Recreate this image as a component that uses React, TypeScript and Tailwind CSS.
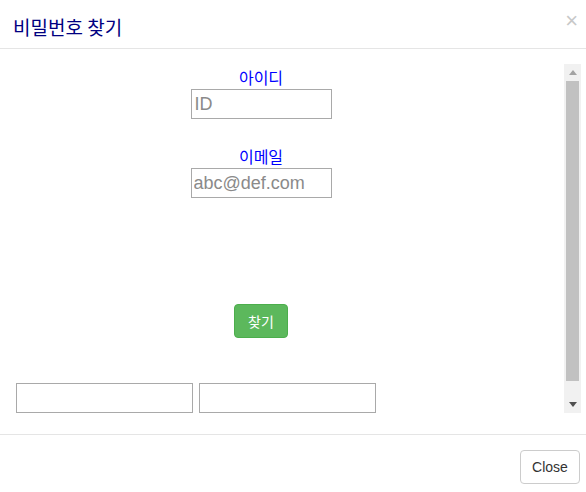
import React from 'react'

const kr = "font-['Noto_Sans_CJK_KR','Noto_Sans',sans-serif]"
const lat = "font-['Liberation_Sans','Noto_Sans_CJK_KR',sans-serif]"

const App: React.FC = () => {
    return (
        <div className="w-[586px] h-[492px] bg-white flex flex-col">
            {/* Header */}
            <div className="h-[49px] shrink-0 border-b border-[#e5e5e5] pl-[13px] pr-[8px] flex items-center justify-between">
                <h4 className={`${kr} text-[19px] leading-none text-[#000080] mt-[4px]`}>비밀번호 찾기</h4>
                <button className={`${lat} text-[22px] font-normal leading-none text-[#c8c8c8] -mt-[6px]`}>×</button>
            </div>

            {/* Body */}
            <div className="flex-1 pt-[15px]">
                <div className="h-[349px] ml-[15px] mr-[5px] flex">
                    <div className="flex-1 overflow-hidden">
                        <div className="pt-[2px]">
                            <div className="w-[492px] flex flex-col items-center">
                                <label className={`${kr} text-[16px] leading-[23px] text-[#0000ff]`}>아이디</label>
                                <input
                                    className={`${lat} w-[141px] h-[30px] border border-[#a9a9a9] px-[3px] text-[18px] outline-none placeholder:text-[#8a8a8a]`}
                                    placeholder="ID"
                                />
                                <label className={`${kr} text-[16px] leading-[23px] text-[#0000ff] mt-[26px]`}>이메일</label>
                                <input
                                    className={`${lat} w-[141px] h-[30px] border border-[#a9a9a9] px-[2px] text-[18px] outline-none placeholder:text-[#8a8a8a]`}
                                    placeholder="abc@def.com"
                                />
                                <button className={`${kr} mt-[106px] w-[54px] h-[34px] rounded-[4px] bg-[#5cb85c] border border-[#4cae4c] text-white text-[14px]`}>
                                    찾기
                                </button>
                            </div>
                            <div className="mt-[45px] ml-[1px] flex gap-[6px]">
                                <input className="w-[177px] h-[30px] border border-[#a9a9a9] outline-none" />
                                <input className="w-[177px] h-[30px] border border-[#a9a9a9] outline-none" />
                            </div>
                        </div>
                    </div>

                    {/* Scrollbar */}
                    <div className="w-[17px] shrink-0 bg-[#f1f1f1] flex flex-col items-center">
                        <div className="h-[17px] flex items-center justify-center">
                            <svg width="8" height="5" viewBox="0 0 8 5"><path d="M4 0 L8 5 L0 5 Z" fill="#a3a3a3" /></svg>
                        </div>
                        <div className="w-[13px] h-[300px] bg-[#c1c1c1]" />
                        <div className="flex-1" />
                        <div className="h-[17px] flex items-center justify-center">
                            <svg width="8" height="5" viewBox="0 0 8 5"><path d="M0 0 L8 0 L4 5 Z" fill="#505050" /></svg>
                        </div>
                    </div>
                </div>
            </div>

            {/* Footer */}
            <div className="h-[58px] shrink-0 border-t border-[#e5e5e5] pt-[15px] pr-[6px] flex justify-end">
                <button className={`${lat} h-[34px] w-[60px] rounded-[4px] border border-[#cccccc] bg-white text-[14px] text-[#333333]`}>
                    Close
                </button>
            </div>
        </div>
    )
}

export default App
